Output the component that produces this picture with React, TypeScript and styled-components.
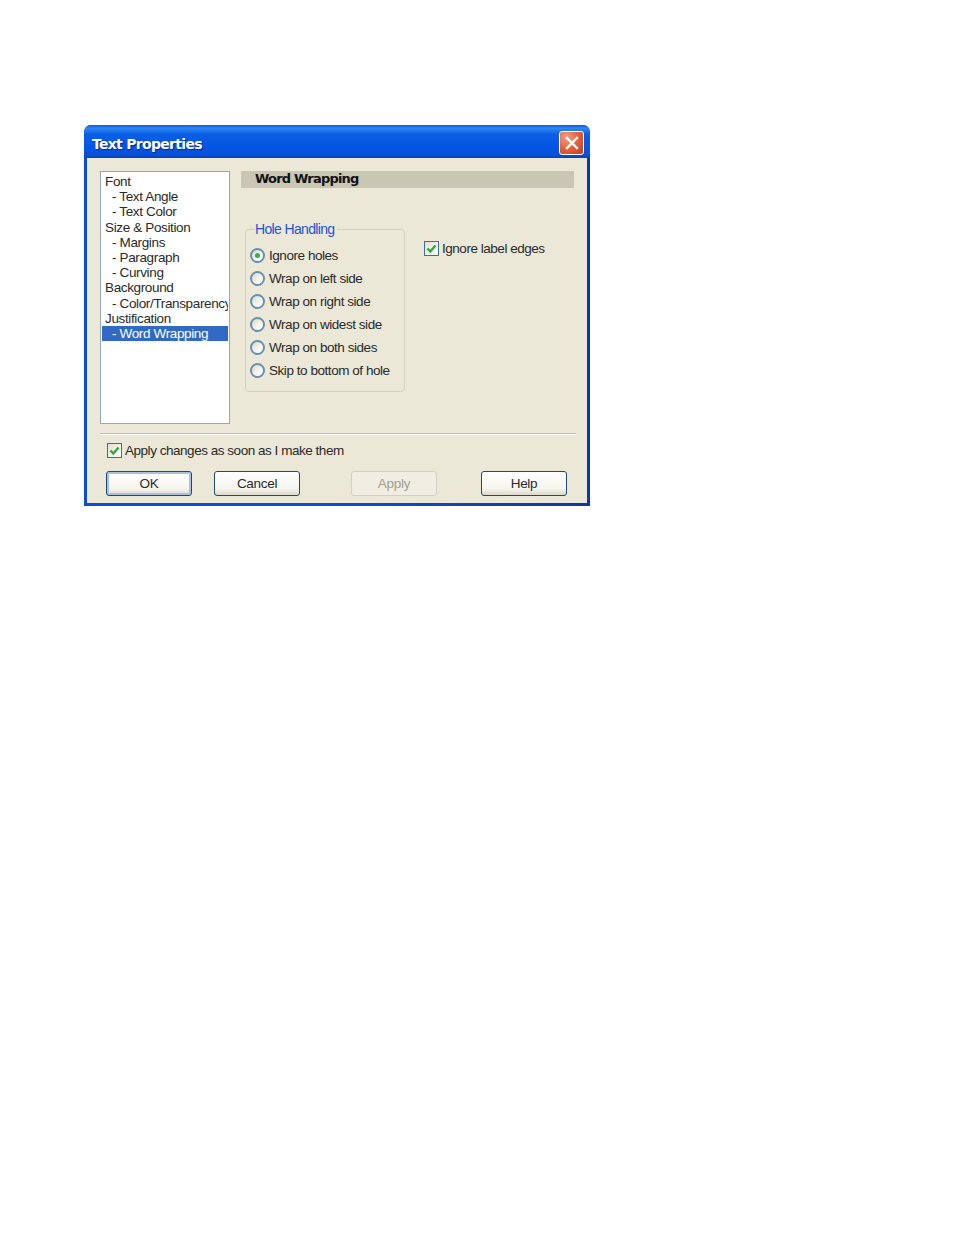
import React from "react";
import styled, { createGlobalStyle } from "styled-components";

const Global = createGlobalStyle`
  html, body { margin: 0; background: #fff; }
  body { font-family: "Liberation Sans", Arial, sans-serif; font-size: 14px; color: #2a2a2a; }
`;

const Page = styled.div`
  padding: 125px 0 0 84px;
  height: 1110px;
`;

const Window = styled.div`
  width: 506px;
  height: 381px;
  box-sizing: border-box;
  display: flex;
  flex-direction: column;
  border-radius: 7px 7px 0 0;
  background: linear-gradient(90deg, #0a4fd0 0%, #0a4fd0 50%, #0a3aa8 100%);
  overflow: hidden;
`;

const TitleBar = styled.div`
  height: 33px;
  flex: none;
  box-sizing: border-box;
  display: flex;
  align-items: center;
  justify-content: space-between;
  padding: 2px 6px 0 8px;
  background: linear-gradient(180deg, #0a5ce0 0%, #2f86f2 10%, #0a5fe6 28%, #0355e4 70%, #0a50d6 90%, #0341c0 100%);
`;

const Title = styled.div`
  margin-top: 2px;
  color: #fff;
  font-family: "DejaVu Sans", sans-serif;
  font-size: 14px;
  font-weight: 700;
  letter-spacing: -0.7px;
  text-shadow: 1px 1px 1px #0a2a90;
`;

const CloseButton = styled.div`
  width: 25px;
  height: 24px;
  box-sizing: border-box;
  display: flex;
  align-items: center;
  justify-content: center;
  border: 1px solid #fff;
  border-radius: 3px;
  background: radial-gradient(circle at 30% 25%, #f0a088 0%, #e2613c 50%, #c83a18 100%);
`;

const Client = styled.div`
  flex: 1;
  margin: 0 3px 3px 3px;
  padding: 13px 0 0 13px;
  background: #ebe8d8;
  display: flex;
  flex-direction: column;
  min-height: 0;
`;

const Upper = styled.div`
  display: flex;
  gap: 11px;
  height: 253px;
  flex: none;
`;

const TreeList = styled.div`
  width: 130px;
  height: 253px;
  box-sizing: border-box;
  border: 1px solid #8fa8bf;
  background: #fff;
  padding: 2px 1px;
  overflow: hidden;
`;

const TreeRow = styled.div<{ $child?: boolean; $selected?: boolean }>`
  height: 15.2px;
  line-height: 15.2px;
  white-space: nowrap;
  overflow: hidden;
  padding-left: ${(p) => (p.$child ? "10px" : "3px")};
  font-size: 13.5px;
  letter-spacing: -0.36px;
  color: ${(p) => (p.$selected ? "#fff" : "#2a2a2a")};
  background: ${(p) => (p.$selected ? "#316ac5" : "transparent")};
`;

const RightPane = styled.div`
  width: 333px;
  display: flex;
  flex-direction: column;
`;

const SectionHeader = styled.div`
  height: 17px;
  line-height: 16px;
  padding-left: 14px;
  background: #c9c6b3;
  font-family: "DejaVu Sans", sans-serif;
  font-size: 13px;
  font-weight: 700;
  letter-spacing: -0.8px;
  color: #111;
`;

const Options = styled.div`
  display: flex;
  align-items: flex-start;
  gap: 19px;
  padding: 33px 0 0 4px;
`;

const GroupBox = styled.fieldset`
  margin: 0;
  width: 160px;
  height: 171px;
  box-sizing: border-box;
  border: 1px solid #d3d0c0;
  border-radius: 4px;
  padding: 0 0 0 4px;
  display: flex;
  flex-direction: column;
`;

const GroupLegend = styled.legend`
  color: #1c55d8;
  font-size: 14px;
  letter-spacing: -0.65px;
  padding: 0;
  margin-left: 5px;
  padding-right: 2px;
  line-height: 16px;
`;

const RadioRow = styled.div`
  height: 22.85px;
  display: flex;
  align-items: center;
  gap: 4px;
  font-size: 13.5px;
  letter-spacing: -0.45px;
  white-space: nowrap;
`;

const RadioList = styled.div`
  margin-top: 7.5px;
`;

const RadioDot = styled.span<{ $checked?: boolean }>`
  width: 15px;
  height: 15px;
  box-sizing: border-box;
  flex: none;
  border-radius: 50%;
  border: 2px solid #6890b0;
  background: linear-gradient(135deg, #dcd9cc 0%, #f6f5ee 60%, #fff 100%);
  display: flex;
  align-items: center;
  justify-content: center;
  &::after {
    content: "";
    display: ${(p) => (p.$checked ? "block" : "none")};
    width: 5px;
    height: 5px;
    border-radius: 50%;
    background: #3cb043;
  }
`;

const CheckRow = styled.div<{ $top?: number; $left?: number }>`
  display: flex;
  align-items: center;
  gap: 3px;
  font-size: 13.5px;
  letter-spacing: -0.47px;
  white-space: nowrap;
  margin-top: ${(p) => p.$top ?? 0}px;
  margin-left: ${(p) => p.$left ?? 0}px;
`;

const CheckBox = styled.span`
  width: 15px;
  height: 15px;
  box-sizing: border-box;
  flex: none;
  border: 1.5px solid #3f6f94;
  background: linear-gradient(135deg, #e2dfd2 0%, #fafaf5 80%);
  display: flex;
  align-items: center;
  justify-content: center;
`;

const Divider = styled.div`
  width: 476px;
  height: 1px;
  margin-top: 9px;
  background: #c4c1ae;
  box-shadow: 0 1px 0 #fff;
  flex: none;
`;

const ButtonRow = styled.div`
  display: flex;
  margin: 13px 0 0 6px;
`;

const DialogButton = styled.div<{ $disabled?: boolean; $default?: boolean; $gap?: number }>`
  width: 86px;
  height: 25px;
  box-sizing: border-box;
  margin-left: ${(p) => p.$gap ?? 0}px;
  display: flex;
  align-items: center;
  justify-content: center;
  font-size: 13.5px;
  letter-spacing: -0.3px;
  border-radius: 3px;
  border: 1px solid ${(p) => (p.$disabled ? "#d3d0bf" : "#1c4a78")};
  color: ${(p) => (p.$disabled ? "#a3a08e" : "#2a2a2a")};
  background: ${(p) =>
    p.$disabled ? "#f0eee3" : "linear-gradient(180deg, #ffffff 0%, #f5f4ec 75%, #dcd8cb 100%)"};
  box-shadow: ${(p) => (p.$default ? "inset 0 0 0 2px #a9c0e4" : "none")};
`;

const Tick = () => (
  <svg width="11" height="11" viewBox="0 0 11 11">
    <path d="M1.5 5.5 L4.3 8.5 L9.5 2.5" fill="none" stroke="#2fa83c" strokeWidth="2.4" />
  </svg>
);

const treeItems = [
  { label: "Font" },
  { label: "- Text Angle", child: true },
  { label: "- Text Color", child: true },
  { label: "Size & Position" },
  { label: "- Margins", child: true },
  { label: "- Paragraph", child: true },
  { label: "- Curving", child: true },
  { label: "Background" },
  { label: "- Color/Transparency", child: true },
  { label: "Justification" },
  { label: "- Word Wrapping", child: true, selected: true },
];

const holeOptions = [
  "Ignore holes",
  "Wrap on left side",
  "Wrap on right side",
  "Wrap on widest side",
  "Wrap on both sides",
  "Skip to bottom of hole",
];

export default function App() {
  return (
    <Page>
      <Global />
      <Window>
        <TitleBar>
          <Title>Text Properties</Title>
          <CloseButton>
            <svg width="14" height="14" viewBox="0 0 14 14">
              <path d="M2 2 L12 12 M12 2 L2 12" stroke="#fff" strokeWidth="2.4" strokeLinecap="square" />
            </svg>
          </CloseButton>
        </TitleBar>
        <Client>
          <Upper>
            <TreeList>
              {treeItems.map((item) => (
                <TreeRow key={item.label} $child={item.child} $selected={item.selected}>
                  {item.label}
                </TreeRow>
              ))}
            </TreeList>
            <RightPane>
              <SectionHeader>Word Wrapping</SectionHeader>
              <Options>
                <GroupBox>
                  <GroupLegend>Hole Handling</GroupLegend>
                  <RadioList>
                    {holeOptions.map((label, i) => (
                      <RadioRow key={label}>
                        <RadioDot $checked={i === 0} />
                        {label}
                      </RadioRow>
                    ))}
                  </RadioList>
                </GroupBox>
                <CheckRow $top={20}>
                  <CheckBox>
                    <Tick />
                  </CheckBox>
                  Ignore label edges
                </CheckRow>
              </Options>
            </RightPane>
          </Upper>
          <Divider />
          <CheckRow $top={9} $left={7}>
            <CheckBox>
              <Tick />
            </CheckBox>
            Apply changes as soon as I make them
          </CheckRow>
          <ButtonRow>
            <DialogButton $default>OK</DialogButton>
            <DialogButton $gap={22}>Cancel</DialogButton>
            <DialogButton $gap={51} $disabled>
              Apply
            </DialogButton>
            <DialogButton $gap={44}>Help</DialogButton>
          </ButtonRow>
        </Client>
      </Window>
    </Page>
  );
}
